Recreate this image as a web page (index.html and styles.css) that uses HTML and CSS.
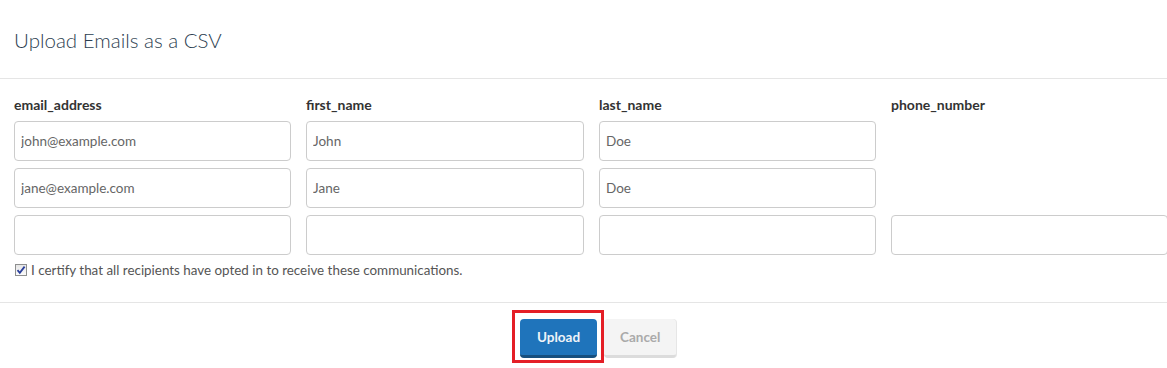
FILE: index.html
```html
<!DOCTYPE html>
<html lang="en">
<head>
    <meta charset="UTF-8">
    <meta name="viewport" content="width=device-width, initial-scale=1.0">
    <title>Upload Emails as a CSV</title>
    <link rel="stylesheet" href="styles.css">
</head>
<body>
    <div class="modal">
        <div class="modal-header">
            <h2>Upload Emails as a CSV</h2>
        </div>

        <form class="modal-body">
            <div class="csv-grid">
                <label>email_address</label>
                <label>first_name</label>
                <label>last_name</label>
                <label>phone_number</label>

                <input type="text" value="john@example.com">
                <input type="text" value="John">
                <input type="text" value="Doe">
                <span class="empty"></span>

                <input type="text" value="jane@example.com">
                <input type="text" value="Jane">
                <input type="text" value="Doe">
                <span class="empty"></span>

                <input type="text">
                <input type="text">
                <input type="text">
                <input type="text">
            </div>

            <label class="certify">
                <input type="checkbox" checked>
                <span class="checkbox">
                    <svg width="10" height="10" viewBox="0 0 10 10">
                        <path d="M1.5 5.2 L3.8 7.8 L8.6 1.6" fill="none" stroke="#2a3f9c" stroke-width="1.8"/>
                    </svg>
                </span>
                I certify that all recipients have opted in to receive these communications.
            </label>
        </form>

        <div class="modal-footer">
            <span class="highlight">
                <button type="button" class="button button-primary">Upload</button>
            </span>
            <button type="button" class="button button-cancel">Cancel</button>
        </div>
    </div>
</body>
</html>
```

FILE: styles.css
```css
body {
    font-family: Lato, "Open Sans", Arial, sans-serif;
    margin: 0;
    padding: 0;
    background-color: #fff;
    color: #333;
    overflow: hidden;
}

.modal {
    width: 1196px;
}

.modal-header {
    height: 79px;
    padding: 0 14px;
    border-bottom: 1px solid #e5e5e5;
    box-sizing: border-box;
}

h2 {
    margin: 0;
    padding-top: 28px;
    font-size: 20.5px;
    font-weight: 300;
    color: #2c3e50;
    line-height: 24px;
}

.modal-body {
    padding: 17px 14px 0;
    height: 224px;
    box-sizing: border-box;
    border-bottom: 1px solid #e5e5e5;
}

.csv-grid {
    display: grid;
    grid-template-columns: 277px 278px 277px 277px;
    column-gap: 15px;
    row-gap: 7px;
}

.csv-grid label {
    font-weight: bold;
    font-size: 14px;
    color: #333;
    line-height: 17px;
    margin-bottom: 1px;
}

.csv-grid input {
    height: 40px;
    box-sizing: border-box;
    padding: 0 6px;
    border: 1px solid #ccc;
    border-radius: 4px;
    font-family: inherit;
    font-size: 13.5px;
    color: #666;
    background-color: #fff;
}

.certify {
    display: flex;
    align-items: center;
    margin-top: 7px;
    font-size: 13.4px;
    color: #555;
}

.certify input {
    display: none;
}

.checkbox {
    display: inline-flex;
    align-items: center;
    justify-content: center;
    width: 12px;
    height: 12px;
    box-sizing: border-box;
    margin: 0 4px 0 1px;
    border: 1px solid #8e8f8f;
    background: linear-gradient(#e6e6e6, #fbfbfb);
}

.modal-footer {
    display: flex;
    justify-content: center;
    gap: 7px;
    padding-top: 16px;
    padding-bottom: 8px;
}

.button {
    height: 39px;
    padding: 0 16px;
    border: none;
    border-radius: 4px;
    font-family: inherit;
    font-size: 13.5px;
    font-weight: bold;
    cursor: pointer;
}

.button-primary {
    width: 77px;
    background-color: #1f74bb;
    border-bottom: 3px solid #164f7e;
    color: #eef3f8;
}

.button-cancel {
    width: 72px;
    background-color: #f4f4f4;
    border-bottom: 3px solid #dcdcdc;
    box-shadow: 1px 0 0 #e6e6e6;
    color: #aaa;
}

/* red annotation box round the Upload button, negative margins keep the layout */
.highlight {
    display: inline-flex;
    padding: 6px 4px 2px 5px;
    margin: -9px -7px -5px -8px;
    border: 3px solid #e41e26;
}
```
